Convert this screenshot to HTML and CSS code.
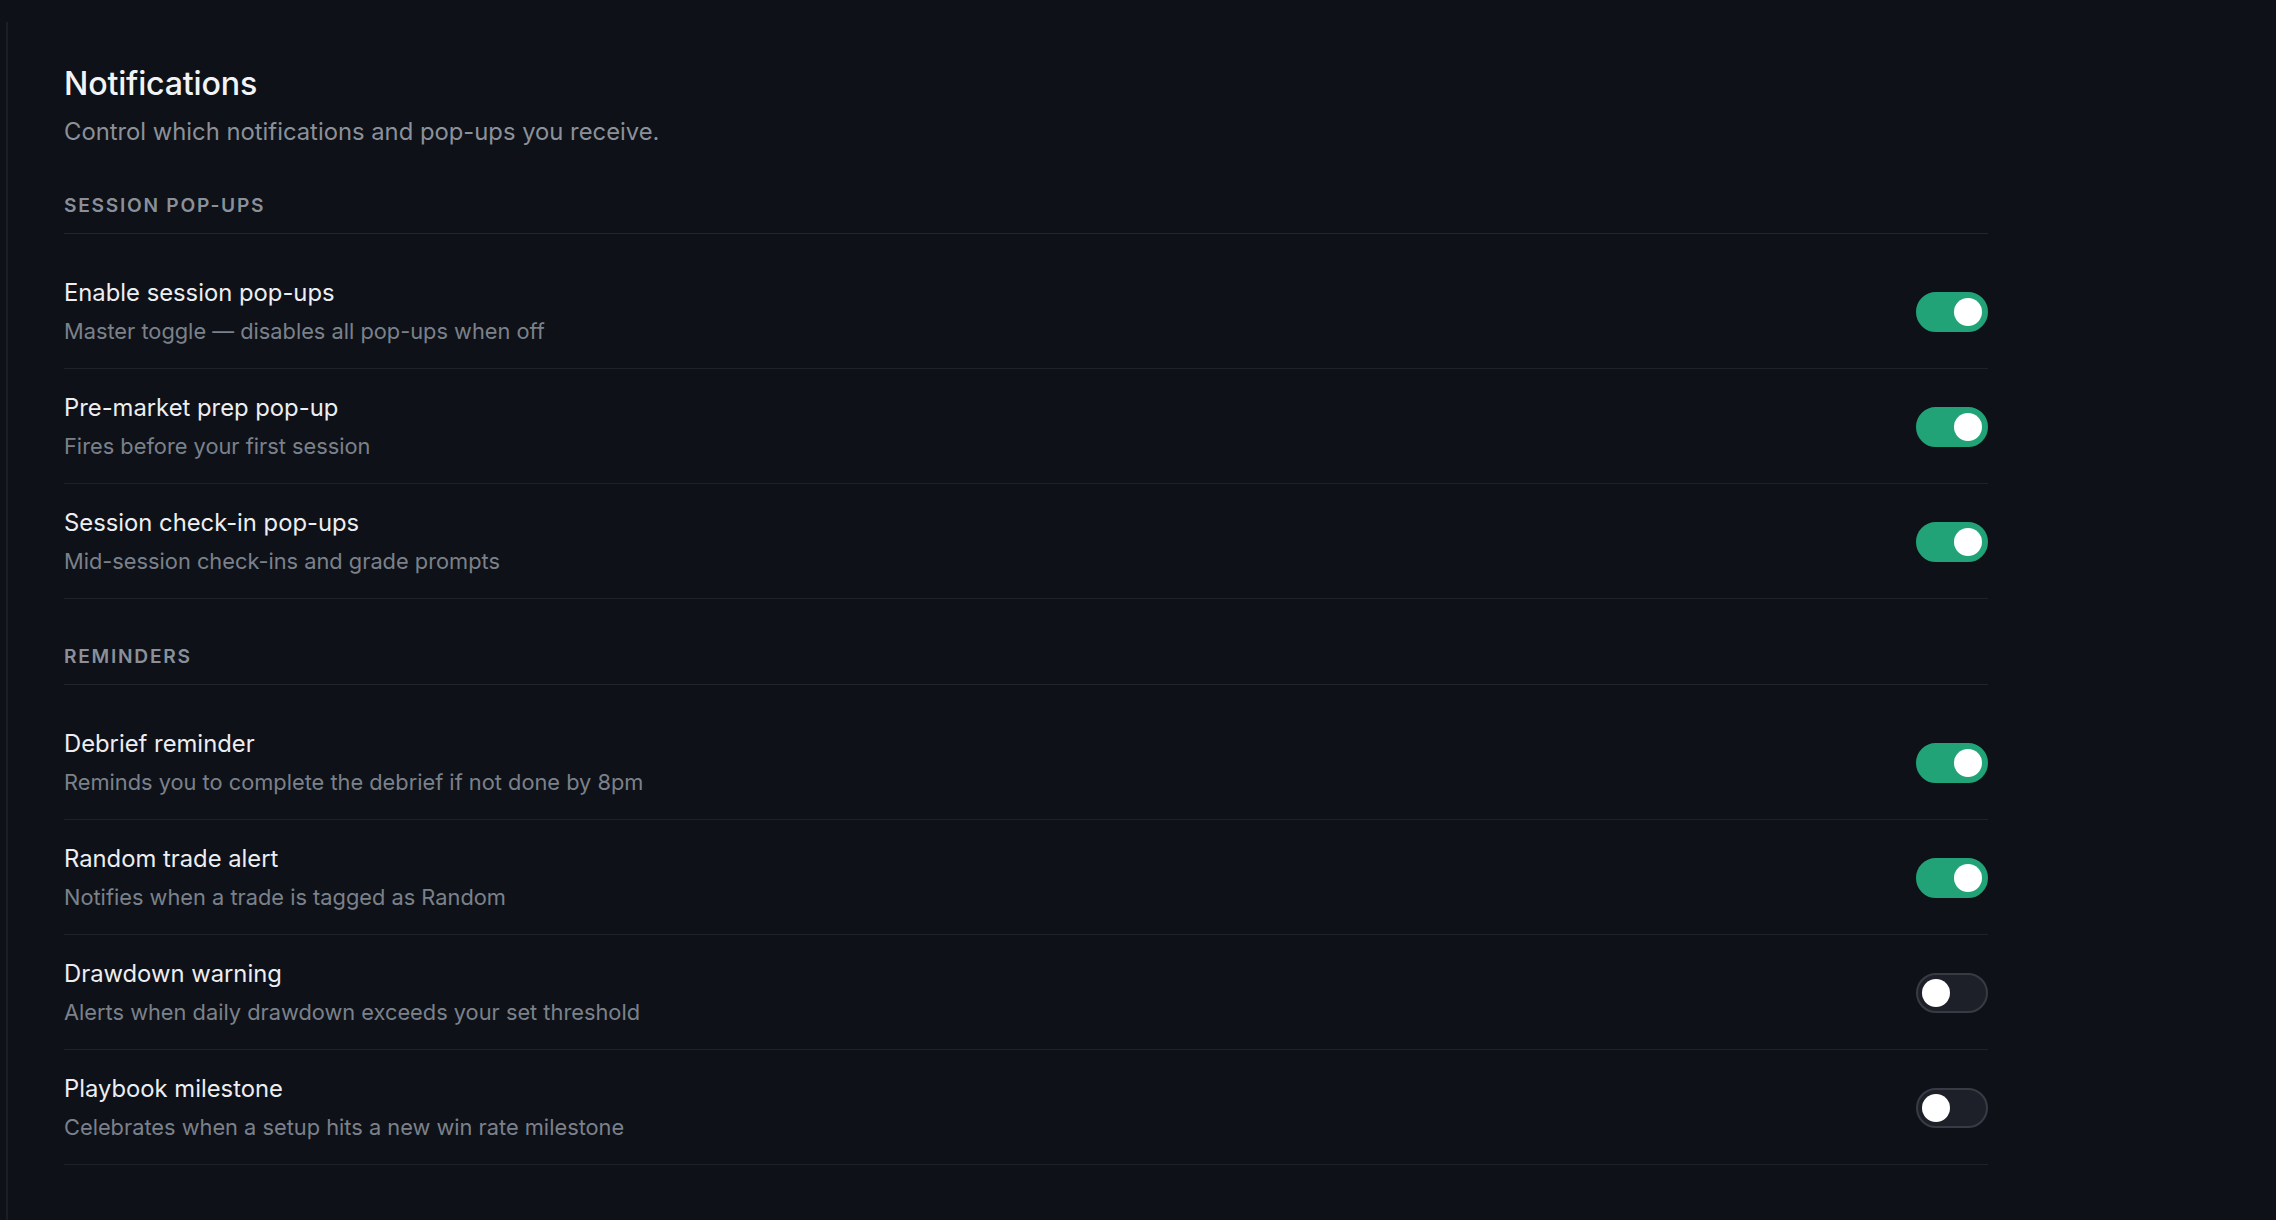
FILE: index.html
```html
<!DOCTYPE html>
<html lang="en">
<head>
    <meta charset="UTF-8">
    <meta name="viewport" content="width=device-width, initial-scale=1.0">
    <title>Notifications</title>
    <link rel="stylesheet" href="styles.css">
</head>
<body>
    <main class="panel">
        <div class="settings">
            <h1>Notifications</h1>
            <p class="subtitle">Control which notifications and pop-ups you receive.</p>

            <section class="group">
                <h2 class="group-label">Session pop-ups</h2>
                <div class="rows">
                    <div class="row">
                        <div class="row-text">
                            <div class="row-title">Enable session pop-ups</div>
                            <div class="row-desc">Master toggle — disables all pop-ups when off</div>
                        </div>
                        <label class="switch"><input type="checkbox" checked><span class="slider"></span></label>
                    </div>
                    <div class="row">
                        <div class="row-text">
                            <div class="row-title">Pre-market prep pop-up</div>
                            <div class="row-desc">Fires before your first session</div>
                        </div>
                        <label class="switch"><input type="checkbox" checked><span class="slider"></span></label>
                    </div>
                    <div class="row">
                        <div class="row-text">
                            <div class="row-title">Session check-in pop-ups</div>
                            <div class="row-desc">Mid-session check-ins and grade prompts</div>
                        </div>
                        <label class="switch"><input type="checkbox" checked><span class="slider"></span></label>
                    </div>
                </div>
            </section>

            <section class="group">
                <h2 class="group-label">Reminders</h2>
                <div class="rows">
                    <div class="row">
                        <div class="row-text">
                            <div class="row-title">Debrief reminder</div>
                            <div class="row-desc">Reminds you to complete the debrief if not done by 8pm</div>
                        </div>
                        <label class="switch"><input type="checkbox" checked><span class="slider"></span></label>
                    </div>
                    <div class="row">
                        <div class="row-text">
                            <div class="row-title">Random trade alert</div>
                            <div class="row-desc">Notifies when a trade is tagged as Random</div>
                        </div>
                        <label class="switch"><input type="checkbox" checked><span class="slider"></span></label>
                    </div>
                    <div class="row">
                        <div class="row-text">
                            <div class="row-title">Drawdown warning</div>
                            <div class="row-desc">Alerts when daily drawdown exceeds your set threshold</div>
                        </div>
                        <label class="switch"><input type="checkbox"><span class="slider"></span></label>
                    </div>
                    <div class="row">
                        <div class="row-text">
                            <div class="row-title">Playbook milestone</div>
                            <div class="row-desc">Celebrates when a setup hits a new win rate milestone</div>
                        </div>
                        <label class="switch"><input type="checkbox"><span class="slider"></span></label>
                    </div>
                </div>
            </section>
        </div>
    </main>
</body>
</html>
```

FILE: styles.css
```css
* {
    box-sizing: border-box;
    margin: 0;
    padding: 0;
}

html, body {
    height: 100%;
}

body {
    background: #0e1117;
    font-family: Inter, "Noto Sans", sans-serif;
    color: #eceef2;
    overflow: hidden;
}

.panel {
    margin: 22px 0 0 6px;
    min-height: calc(100% - 22px);
    border-left: 2px solid #1b1e25;
    padding: 42px 0 0 56px;
}

.settings {
    max-width: 1924px;
}

h1 {
    font-size: 32.2px;
    line-height: 40px;
    font-weight: 500;
    color: #f1f3f6;
    letter-spacing: -0.2px;
}

.subtitle {
    margin-top: 12px;
    font-size: 23.8px;
    line-height: 32px;
    color: #8b9099;
}

.group {
    margin-top: 46px;
}

.group-label {
    font-size: 19.2px;
    line-height: 23px;
    font-weight: 600;
    letter-spacing: 0.09em;
    text-transform: uppercase;
    color: #8a9099;
    padding-bottom: 16px;
    border-bottom: 1.5px solid #22252d;
}

.rows {
    margin-top: 20px;
}

.row {
    display: flex;
    align-items: center;
    justify-content: space-between;
    padding: 23px 0 22px;
    border-bottom: 1.5px solid #1f222a;
}

.row-title {
    font-size: 23.8px;
    line-height: 32px;
    color: #eceef2;
}

.row-desc {
    margin-top: 7px;
    font-size: 21.8px;
    line-height: 30px;
    color: #7b818b;
}

/* toggle switch */
.switch {
    position: relative;
    width: 72px;
    height: 40px;
    flex-shrink: 0;
    cursor: pointer;
}

.switch input {
    display: none;
}

.slider {
    position: absolute;
    inset: 0;
    border-radius: 20px;
    background: #1d2028;
    border: 2px solid #383b43;
}

.slider::after {
    content: "";
    position: absolute;
    top: 4px;
    left: 4px;
    width: 28px;
    height: 28px;
    border-radius: 50%;
    background: #ffffff;
}

.switch input:checked + .slider {
    background: #21a377;
    border-color: #21a377;
}

.switch input:checked + .slider::after {
    left: 36px;
}
```
